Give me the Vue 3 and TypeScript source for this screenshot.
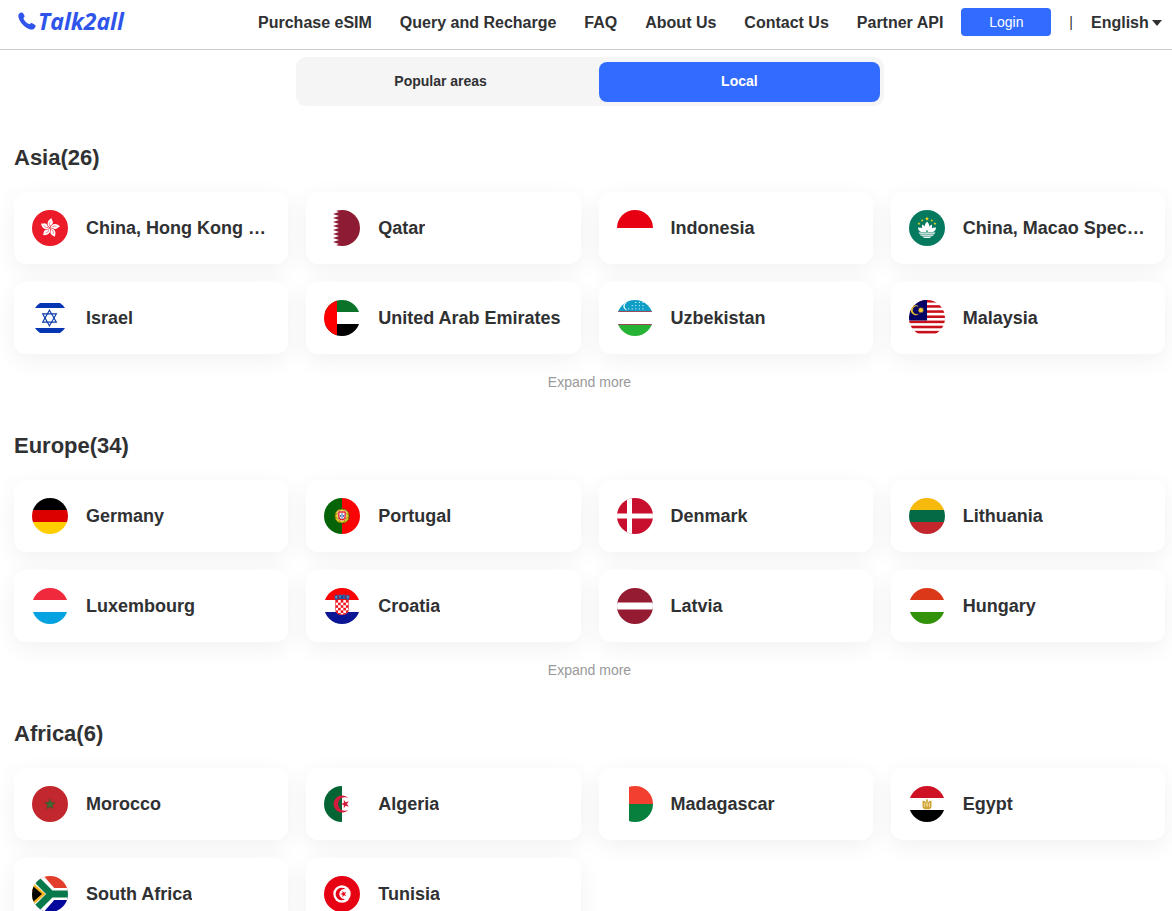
<script setup lang="ts">
import { ref } from 'vue'

interface Country {
  name: string
  flag: string
}
interface Region {
  name: string
  total: number
  countries: Country[]
  expandable: boolean
}

const links = ['Purchase eSIM', 'Query and Recharge', 'FAQ', 'About Us', 'Contact Us', 'Partner API']
const tabs = ['Popular areas', 'Local']
const activeTab = ref('Local')
const language = ref('English')

const rect = (x: number, y: number, w: number, h: number, fill: string): string =>
  `<rect x="${x}" y="${y}" width="${w}" height="${h}" fill="${fill}"/>`

const circle = (cx: number, cy: number, r: number, fill: string): string =>
  `<circle cx="${cx}" cy="${cy}" r="${r}" fill="${fill}"/>`

const path = (d: string, fill: string, extra = ''): string => `<path d="${d}" fill="${fill}" ${extra}/>`

const bands = (top: string, middle: string, bottom: string): string =>
  rect(0, 0, 36, 12, top) + rect(0, 12, 36, 12, middle) + rect(0, 24, 36, 12, bottom)

function star(cx: number, cy: number, r: number, fill: string, points = 5, ratio = 0.382, turn = -90, extra = ''): string {
  const list: string[] = []
  for (let i = 0; i < points * 2; i++) {
    const angle = ((turn + (i * 180) / points) * Math.PI) / 180
    const radius = i % 2 ? r * ratio : r
    list.push(`${(cx + radius * Math.cos(angle)).toFixed(2)},${(cy + radius * Math.sin(angle)).toFixed(2)}`)
  }
  return `<polygon points="${list.join(' ')}" fill="${fill}" ${extra}/>`
}

function hongKong(): string {
  let out = rect(0, 0, 36, 36, '#ec1b2a')
  for (let i = 0; i < 5; i++) {
    out += `<g transform="rotate(${i * 72 + 8} 18 18)">`
    out += path('M18 17.6C14.6 16.4 13.2 11.4 18.4 7.8C17.8 9.6 20.6 10.4 20 13C19.500 15 17.600 15.200 18 17.600Z', '#fff')
    out += path('M17.600 16C16.400 14.400 16.600 12.800 17.800 11.400', 'none', 'stroke="#ec1b2a" stroke-width=".5"')
    out += '</g>'
  }
  return out
}

function qatar(): string {
  let edge = 'M36 0H9'
  for (let i = 0; i < 9; i++) edge += `L15 ${i * 4 + 2}L9 ${i * 4 + 4}`
  return rect(0, 0, 36, 36, '#fff') + path(`${edge}H36Z`, '#8d1b33')
}

function uzbekistan(): string {
  let out = bands('#0f9fc6', '#fff', '#27b436') + rect(0, 11, 36, 1, '#9b4a5c') + rect(0, 24, 36, 1, '#9b4a5c')
  out += path('M9.500 2.600A4 4 0 0 0 9.500 9.800A3.700 3.700 0 0 1 9.500 2.600Z', '#fff', 'stroke="#fff" stroke-width=".6"')
  const rows = [3, 4, 5]
  rows.forEach((count, row) => {
    for (let i = 0; i < count; i++) out += circle(26 - i * 3.6, 2.4 + row * 3.2, 0.65, '#d8f1f7')
  })
  return out
}

function macao(): string {
  let out = rect(0, 0, 36, 36, '#067a5f')
  out += star(18, 8.8, 2.2, '#f5d81f') + star(13.2, 10.4, 1.6, '#f5d81f') + star(22.8, 10.4, 1.6, '#f5d81f')
  out += star(10, 13.6, 1.6, '#f5d81f') + star(26, 13.6, 1.6, '#f5d81f')
  out += path('M18 11.600C21 14.600 21 18 18 21C15 18 15 14.600 18 11.600Z', '#fff')
  out += path('M17.400 21.500C13.500 21 12.400 17.600 13.200 14.400C16 16 17.600 18 17.400 21.500Z', '#fff')
  out += path('M18.600 21.500C22.500 21 23.600 17.600 22.800 14.400C20 16 18.400 18 18.600 21.500Z', '#fff')
  out += path('M9 17.600C12.500 17.500 16 19 17.500 22H12C10 21.500 9 19.600 9 17.600Z', '#fff')
  out += path('M27 17.600C23.500 17.500 20 19 18.500 22H24C26 21.500 27 19.600 27 17.600Z', '#fff')
  out += path('M9.500 22.400H26.500L25.600 23.800H10.400Z', '#fff')
  out += path('M10.800 24.600H25.200L24 25.800H12Z', '#fff')
  out += path('M13 26.600H23L20.500 27.900H15.500Z', '#fff')
  return out
}

function israel(): string {
  const line = 'stroke="#0a3ba8" stroke-width="1.1"'
  return (
    rect(0, 0, 36, 36, '#fff') +
    rect(0, 3, 36, 5, '#0436b4') +
    rect(0, 28, 36, 5, '#0436b4') +
    path('M17.500 10.200L24.400 22.100H10.600Z', 'none', line) +
    path('M17.500 25.800L24.400 13.900H10.600Z', 'none', line)
  )
}

function malaysia(): string {
  let out = rect(0, 0, 36, 36, '#fff')
  for (let i = 0; i < 7; i++) out += rect(0, (i * 36) / 7, 36, 18 / 7, '#c9101a')
  out += rect(0, 0, 18, 20.5, '#030366')
  out += path('M9.400 6.200A4.800 4.800 0 1 0 9.400 14.200A4.300 4.300 0 1 1 9.400 6.200Z', '#f6cc2a', 'stroke="#f6cc2a" stroke-width=".4"')
  return out + star(11.9, 10.2, 3.2, '#f6cc2a', 12, 0.6)
}

function portugal(): string {
  return (
    rect(0, 0, 18, 36, '#056407') +
    rect(18, 0, 18, 36, '#fb0305') +
    circle(18, 18, 7.3, '#e5d519') +
    '<g fill="none" stroke="#43470c" stroke-width=".6"><circle cx="18" cy="18" r="7.300"/><ellipse cx="18" cy="18" rx="7.300" ry="3"/><ellipse cx="18" cy="18" rx="3.500" ry="7.300"/></g>' +
    path('M13.800 13H22.200V18.500C22.200 24.200 13.800 24.200 13.800 18.500Z', '#e3242b', 'stroke="#fff" stroke-width=".5"') +
    path('M15.500 14.800H20.500V18.500C20.500 21.800 15.500 21.800 15.500 18.500Z', '#fff') +
    rect(17.4, 15.2, 1.2, 1.5, '#1e4a9c') +
    rect(15.8, 17.2, 1.2, 1.5, '#1e4a9c') +
    rect(17.4, 17.2, 1.2, 1.5, '#1e4a9c') +
    rect(19, 17.2, 1.2, 1.5, '#1e4a9c') +
    rect(17.4, 19.2, 1.2, 1.3, '#1e4a9c')
  )
}

function croatia(): string {
  let out = bands('#fb0305', '#fff', '#0a1694')
  out += '<clipPath id="hr-shield"><path d="M11.500 12H24.500V21.500C24.500 28.500 11.500 28.500 11.500 21.500Z"/></clipPath>'
  out += '<g clip-path="url(#hr-shield)">' + rect(11, 12, 14, 16, '#fff')
  for (let row = 0; row < 6; row++) {
    for (let col = 0; col < 5; col++) {
      if ((row + col) % 2 === 0) out += rect(11.5 + col * 2.6, 12 + row * 2.6, 2.6, 2.6, '#f0141c')
    }
  }
  out += '</g>' + path('M11.500 12V21.500C11.500 28.500 24.500 28.500 24.500 21.500V12', 'none', 'stroke="#e0141c" stroke-width=".6"')
  out += path('M11.300 12L10.200 8L12.500 6.800L14.200 7.600L16 6.200L18 7.200L20 6.200L21.800 7.600L23.500 6.800L25.800 8L24.700 12Q18 10.200 11.300 12Z', '#2d5ea8')
  out += rect(13.6, 7.8, 1.6, 2.8, '#8a2740') + rect(17.2, 7.8, 1.6, 2.4, '#173a80') + rect(20.8, 7.8, 1.6, 2.8, '#8a2740')
  out += circle(12.2, 9, 0.8, '#6fc7e8') + circle(16.2, 8.6, 0.7, '#6fc7e8') + circle(23.8, 9, 0.8, '#6fc7e8')
  return out
}

function algeria(): string {
  return (
    rect(0, 0, 18, 36, '#046434') +
    rect(18, 0, 18, 36, '#fff') +
    path('M24.500 12.200A8.600 8.600 0 1 0 24.500 23.800A6.800 6.800 0 1 1 24.500 12.200Z', '#d31a3c') +
    star(21.2, 18, 4.6, '#d31a3c', 5, 0.382, 180)
  )
}

function egypt(): string {
  return (
    bands('#cf1126', '#fff', '#000') +
    path('M13.500 14.500L16 15.300L17 16.500L17.200 14L18 12.600L18.800 14L19 16.500L20 15.300L22.500 14.500V21L21 23.200H15L13.500 21Z', '#cfa538') +
    path('M15.500 17V21M20.500 17V21M18 16V21', 'none', 'stroke="#f7e7b8" stroke-width=".7"') +
    rect(16.8, 17.2, 2.4, 3, '#e8cd7c')
  )
}

function southAfrica(): string {
  return (
    rect(0, 0, 36, 18, '#e23d2b') +
    rect(0, 18, 36, 18, '#05089b') +
    path('M2 -2L19.500 18L2 38M18 18H38', 'none', 'stroke="#fff" stroke-width="12"') +
    path('M-2 -2L18.500 18L-2 38Z', '#fff') +
    path('M0 -1L19 18L0 37M18 18H38', 'none', 'stroke="#07794a" stroke-width="7"') +
    path('M-1 5L13.500 18L-1 31Z', '#f5b321') +
    path('M-1 8.500L10 18L-1 27.500Z', '#000')
  )
}

function tunisia(): string {
  return (
    rect(0, 0, 36, 36, '#e60113') +
    circle(18, 18, 8.7, '#fff') +
    path('M21.700 13.200A6.200 6.200 0 1 0 21.700 22.800A5 5 0 1 1 21.700 13.200Z', '#e60113') +
    star(19.6, 18, 3.4, '#e60113', 5, 0.382, 180)
  )
}

const regions: Region[] = [
  {
    name: 'Asia',
    total: 26,
    expandable: true,
    countries: [
      { name: 'China, Hong Kong …', flag: hongKong() },
      { name: 'Qatar', flag: qatar() },
      { name: 'Indonesia', flag: rect(0, 0, 36, 18, '#e60012') + rect(0, 18, 36, 18, '#fff') },
      { name: 'China, Macao Spec…', flag: macao() },
      { name: 'Israel', flag: israel() },
      { name: 'United Arab Emirates', flag: bands('#0b7329', '#fff', '#000') + rect(0, 0, 13, 36, '#fe0000') },
      { name: 'Uzbekistan', flag: uzbekistan() },
      { name: 'Malaysia', flag: malaysia() },
    ],
  },
  {
    name: 'Europe',
    total: 34,
    expandable: true,
    countries: [
      { name: 'Germany', flag: bands('#000', '#dd0000', '#ffce00') },
      { name: 'Portugal', flag: portugal() },
      { name: 'Denmark', flag: rect(0, 0, 36, 36, '#c8102e') + rect(10, 0, 5, 36, '#fff') + rect(0, 15.5, 36, 5, '#fff') },
      { name: 'Lithuania', flag: bands('#f6b90c', '#046a45', '#c1272d') },
      { name: 'Luxembourg', flag: bands('#f0293d', '#fff', '#05a2e1') },
      { name: 'Croatia', flag: croatia() },
      { name: 'Latvia', flag: rect(0, 0, 36, 36, '#941b31') + rect(0, 14.5, 36, 7, '#fff') },
      { name: 'Hungary', flag: bands('#da3819', '#fff', '#33920b') },
    ],
  },
  {
    name: 'Africa',
    total: 6,
    expandable: false,
    countries: [
      { name: 'Morocco', flag: rect(0, 0, 36, 36, '#c1272d') + star(18, 18.3, 5.4, '#3f6b35', 5, 0.42, -90, 'stroke="#35502a" stroke-width=".5"') },
      { name: 'Algeria', flag: algeria() },
      { name: 'Madagascar', flag: rect(0, 0, 36, 36, '#fff') + rect(12, 0, 24, 18, '#f23f30') + rect(12, 18, 24, 18, '#06803c') },
      { name: 'Egypt', flag: egypt() },
      { name: 'South Africa', flag: southAfrica() },
      { name: 'Tunisia', flag: tunisia() },
    ],
  },
]
</script>

<template>
  <div class="page">
    <header class="header">
      <a class="logo" href="#" aria-label="Talk2all">
        <svg class="logo-icon" viewBox="0 0 18 18" aria-hidden="true">
          <path d="M1.200 1.600C2.400 .2 4.400 0 5 1L6.600 4C6.800 5 5.800 5.600 5.400 6.400C6.400 8.800 8.800 11.100 11.400 12.200C12.200 11.900 12.800 11 13.800 11.100L17.200 13.100C18 13.800 17.200 15.800 15.800 16.900C14 18.200 11 17.400 8 15.500C4.200 12.800 1.200 8.800 .500 5.200C.200 3.600 .400 2.500 1.200 1.600Z" />
        </svg>
        <span>Talk2all</span>
      </a>
      <nav class="nav">
        <a v-for="link in links" :key="link" href="#">{{ link }}</a>
      </nav>
      <button class="login" type="button">Login</button>
      <span class="divider">|</span>
      <div class="language">
        <select v-model="language" aria-label="Language">
          <option>English</option>
        </select>
        <svg class="caret" viewBox="0 0 10 6" aria-hidden="true"><path d="M0 0H10L5 6Z" /></svg>
      </div>
    </header>

    <main class="content">
      <div class="tabs" role="tablist">
        <button
          v-for="tab in tabs"
          :key="tab"
          type="button"
          role="tab"
          class="tab"
          :class="{ active: tab === activeTab }"
          :aria-selected="tab === activeTab"
          @click="activeTab = tab"
        >
          {{ tab }}
        </button>
      </div>

      <section v-for="region in regions" :key="region.name" class="region">
        <h2>{{ region.name }}({{ region.total }})</h2>
        <div class="grid">
          <a v-for="country in region.countries" :key="country.name" class="card" href="#">
            <svg class="flag" viewBox="0 0 36 36" aria-hidden="true"><g v-html="country.flag" /></svg>
            <span class="name">{{ country.name }}</span>
          </a>
        </div>
        <button v-if="region.expandable" class="more" type="button">Expand more</button>
      </section>
    </main>
  </div>
</template>

<style>
body {
  margin: 0;
  background: #fff;
}
</style>

<style scoped>
.page {
  height: 100vh;
  overflow-x: hidden;
  overflow-y: auto;
  scrollbar-width: none;
  color: #303133;
  font-family: "Liberation Sans", Arial, sans-serif;
}
.page * {
  box-sizing: border-box;
}
a {
  color: inherit;
  text-decoration: none;
}
button,
select {
  border: 0;
  padding: 0;
  font-family: inherit;
  color: inherit;
  background: none;
  cursor: pointer;
}
.header {
  display: flex;
  align-items: center;
  height: 50px;
  padding: 0 10px 6px 18px;
  border-bottom: 1px solid #ccc;
}
.logo {
  display: flex;
  align-items: center;
  gap: 2px;
  padding-bottom: 2px;
  color: #2f54eb;
  font: italic 700 23px/28px "Open Sans", sans-serif;
}
.logo-icon {
  width: 18px;
  height: 18px;
  fill: currentColor;
}
.nav {
  display: flex;
  gap: 28px;
  margin-left: auto;
  padding-top: 2px;
  font-size: 16px;
  font-weight: 700;
  white-space: nowrap;
}
.login {
  width: 90px;
  height: 28px;
  margin-left: 18px;
  border-radius: 4px;
  background: #326bff;
  color: #fff;
  font-size: 14px;
}
.divider {
  margin: 0 18px;
  font-size: 14px;
}
.language {
  display: flex;
  align-items: center;
  gap: 3px;
  padding-top: 2px;
}
.language select {
  appearance: none;
  font-size: 16px;
  font-weight: 700;
  line-height: 20px;
}
.caret {
  width: 10px;
  height: 6px;
  fill: currentColor;
}
.content {
  padding: 7px 6px 24px 14px;
}
.tabs {
  display: grid;
  grid-template-columns: 1fr 1fr;
  gap: 18px;
  width: 51%;
  margin: 0 auto;
  padding: 5px 4px 4px;
  border-radius: 10px;
  background: #f5f5f5;
}
.tab {
  height: 40px;
  padding-bottom: 2px;
  border-radius: 8px;
  font-size: 14px;
  font-weight: 700;
}
.tab.active {
  background: #326bff;
  color: #fff;
}
.region {
  display: flex;
  flex-direction: column;
  padding: 39px 1px 0 0;
}
h2 {
  margin: 0 0 22px;
  font-size: 22px;
  line-height: 25px;
}
.region + .region {
  padding-top: 43px;
}
.grid {
  display: grid;
  grid-template-columns: repeat(4, minmax(0, 1fr));
  gap: 18px;
}
.card {
  display: flex;
  align-items: center;
  gap: 18px;
  padding: 18px;
  border-radius: 12px;
  background: #fff;
  box-shadow: 0 6px 24px rgba(0, 0, 0, 0.06);
}
.flag {
  flex: none;
  width: 36px;
  height: 36px;
  border-radius: 50%;
  overflow: hidden;
}
.name {
  min-width: 0;
  overflow: hidden;
  font-size: 18px;
  font-weight: 700;
  line-height: 24px;
  text-overflow: ellipsis;
  white-space: nowrap;
}
.more {
  align-self: center;
  margin-top: 20px;
  color: #999;
  font-size: 14px;
  line-height: 16px;
}
</style>
